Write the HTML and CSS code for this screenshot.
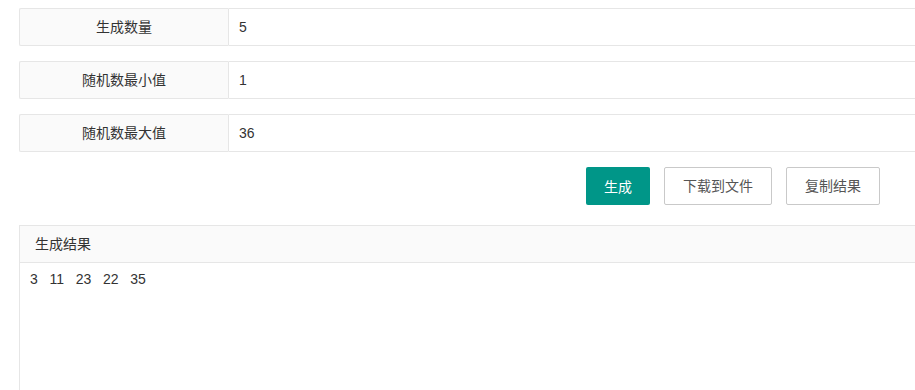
FILE: index.html
```html
<!DOCTYPE html>
<html lang="zh-CN">
<head>
    <meta charset="UTF-8">
    <meta name="viewport" content="width=device-width, initial-scale=1.0">
    <title>随机数生成器</title>
    <link rel="stylesheet" href="styles.css">
</head>
<body>
    <div class="page">
        <form class="form-pane">
            <div class="form-item">
                <label class="form-label">生成数量</label>
                <div class="input-block">
                    <input class="input" type="text" value="5">
                </div>
            </div>
            <div class="form-item">
                <label class="form-label">随机数最小值</label>
                <div class="input-block">
                    <input class="input" type="text" value="1">
                </div>
            </div>
            <div class="form-item">
                <label class="form-label">随机数最大值</label>
                <div class="input-block">
                    <input class="input" type="text" value="36">
                </div>
            </div>

            <div class="btn-row">
                <button type="button" class="btn btn-normal">生成</button>
                <button type="button" class="btn btn-primary">下载到文件</button>
                <button type="button" class="btn btn-primary">复制结果</button>
            </div>
        </form>

        <!-- result panel -->
        <div class="result-panel">
            <div class="result-header">生成结果</div>
            <div class="result-body">3   11   23   22   35</div>
        </div>
    </div>
</body>
</html>
```

FILE: styles.css
```css
* {
    margin: 0;
    padding: 0;
    box-sizing: border-box;
}

html, body {
    height: 100%;
    overflow: hidden;
}

body {
    font-family: "Liberation Sans", Arial, "Noto Sans CJK SC", sans-serif;
    font-size: 14px;
    color: #333;
    background: #fff;
}

.page {
    width: 920px;
    padding: 8px 0 0 19px;
}

.form-item {
    display: flex;
    height: 38px;
    margin-bottom: 15px;
}

.form-label {
    width: 209px;
    height: 38px;
    padding: 8px 15px;
    line-height: 20px;
    text-align: center;
    background-color: #fafafa;
    border: 1px solid #e6e6e6;
    border-right: none;
    border-radius: 2px 0 0 2px;
    color: #333;
}

.input-block {
    flex: 1;
}

.input {
    display: block;
    width: 100%;
    height: 38px;
    padding: 0 10px;
    line-height: 38px;
    border: 1px solid #e6e6e6;
    border-radius: 0 2px 2px 0;
    font: inherit;
    color: #333;
    outline: none;
    background: #fff;
}

.btn-row {
    display: flex;
    justify-content: flex-end;
    gap: 14px;
    width: 861px;
}

.btn {
    height: 38px;
    line-height: 38px;
    padding: 0 18px;
    font: inherit;
    border-radius: 2px;
    cursor: pointer;
    white-space: nowrap;
}

.btn-normal {
    background-color: #009688;
    border: none;
    color: #fff;
}

.btn-primary {
    line-height: 36px;
    background-color: #fff;
    border: 1px solid #c9c9c9;
    color: #555;
}

/* bottom edge falls just below the window, as in the screenshot */
.result-panel {
    margin-top: 20px;
    border: 1px solid #e6e6e6;
    border-right: none;
    height: 166px;
}

.result-header {
    height: 37px;
    line-height: 36px;
    padding: 0 15px;
    background-color: #fafafa;
    border-bottom: 1px solid #e6e6e6;
    color: #333;
}

.result-body {
    padding: 6px 10px;
    line-height: 20px;
    white-space: pre;
    color: #333;
}
```
